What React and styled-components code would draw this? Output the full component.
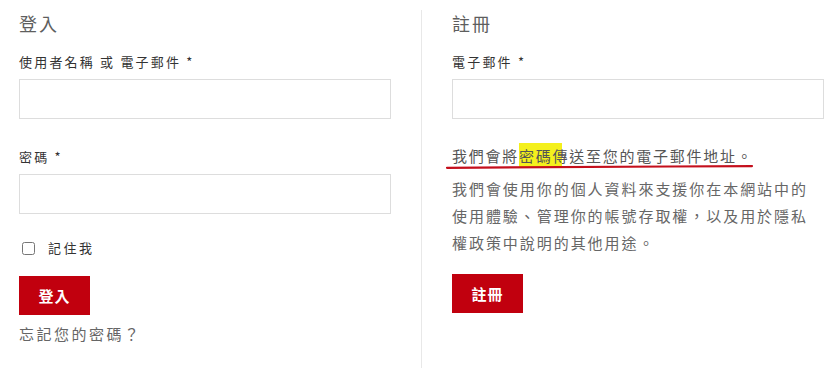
import React from 'react';
import styled, { createGlobalStyle } from 'styled-components';

const GlobalStyle = createGlobalStyle`
  body {
    margin: 0;
    background: #fff;
    font-family: "Noto Sans CJK TC", "Liberation Sans", sans-serif;
  }
`;

const Page = styled.div`
  display: flex;
  align-items: flex-start;
  padding: 10px 0 0 19px;
`;

const Column = styled.div`
  width: 372px;
  display: flex;
  flex-direction: column;
  align-items: flex-start;
  ${p => p.$divided && `
    margin-left: 30px;
    padding-left: 30px;
    border-left: 1px solid #e8e8e8;
    min-height: 358px;
  `}
`;

const Heading = styled.h2`
  margin: 0;
  font-size: 18px;
  line-height: 26px;
  font-weight: 400;
  letter-spacing: 2px;
  color: #5e5e5e;
`;

const Label = styled.label`
  display: block;
  margin-top: ${p => p.$top || 16}px;
  font-size: 13px;
  line-height: 20px;
  letter-spacing: 2.2px;
  color: #333;
`;

const Input = styled.input`
  display: block;
  box-sizing: border-box;
  width: 372px;
  height: 40px;
  margin-top: 7px;
  border: 1px solid #ddd;
  background: #fff;
  outline: none;
`;

const CheckRow = styled.label`
  display: flex;
  align-items: center;
  gap: 13px;
  margin-top: 24px;
  padding-left: 3px;
  font-size: 13px;
  line-height: 20px;
  letter-spacing: 2.5px;
  color: #333;

  input {
    margin: 0;
    width: 13px;
    height: 13px;
  }
`;

const Button = styled.button`
  width: 71px;
  height: 39px;
  margin-top: ${p => p.$top}px;
  border: none;
  background: #c1000e;
  color: #fff;
  font-family: inherit;
  font-size: 15px;
  font-weight: 700;
  letter-spacing: 1px;
  cursor: pointer;
`;

const Forgot = styled.a`
  margin-top: 7px;
  font-size: 15px;
  line-height: 24px;
  letter-spacing: 2.5px;
  color: #666;
  text-decoration: none;
`;

const Note = styled.p`
  position: relative;
  margin: 22px 0 0;
  font-size: 15px;
  line-height: 30px;
  letter-spacing: 1.75px;
  color: #555;
`;

const Mark = styled.span`
  padding: 2px 0 1px;
  background: linear-gradient(90deg, #f4f01c 0 86%, transparent 86% 100%);
`;

const Scribble = styled.svg`
  position: absolute;
  left: -6px;
  top: 24px;
  overflow: visible;
`;

const Privacy = styled.p`
  margin: 4px 0 0;
  font-size: 15px;
  line-height: 27px;
  letter-spacing: 1.95px;
  color: #666;
`;

export default function App() {
  return (
    <>
      <GlobalStyle />
      <Page>
        <Column>
          <Heading>登入</Heading>
          <Label>使用者名稱 或 電子郵件 *</Label>
          <Input type="text" />
          <Label $top={28}>密碼 *</Label>
          <Input type="password" />
          <CheckRow>
            <input type="checkbox" />
            記住我
          </CheckRow>
          <Button $top={18}>登入</Button>
          <Forgot href="#">忘記您的密碼？</Forgot>
        </Column>
        <Column $divided>
          <Heading>註冊</Heading>
          <Label>電子郵件 *</Label>
          <Input type="email" />
          <Note>
            我們會將<Mark>密碼傳</Mark>送至您的電子郵件地址。
            <Scribble width="308" height="4" viewBox="0 0 308 4">
              <path d="M1 2.8 C 80 2.3, 200 1.6, 306 1.1" stroke="#c40f1c" strokeWidth="2.2" fill="none" strokeLinecap="round" />
            </Scribble>
          </Note>
          <Privacy>我們會使用你的個人資料來支援你在本網站中的使用體驗、管理你的帳號存取權，以及用於隱私權政策中說明的其他用途。</Privacy>
          <Button $top={18}>註冊</Button>
        </Column>
      </Page>
    </>
  );
}
